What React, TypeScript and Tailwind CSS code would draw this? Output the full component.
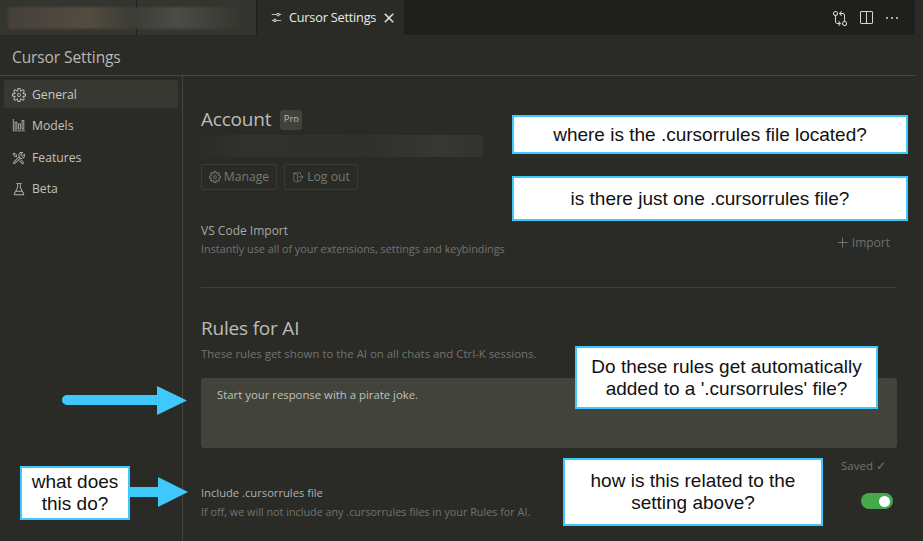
import React from "react";
import { VscSettings, VscClose, VscGitCompare, VscSplitHorizontal, VscEllipsis, VscSettingsGear, VscGraph, VscTools, VscBeaker, VscSignOut, VscAdd } from "react-icons/vsc";

function Callout({ className, children }: { className: string; children: React.ReactNode }) {
  return (
    <div
      className={`absolute flex items-center justify-center border-[2px] border-[#3fc8fb] bg-white text-center text-[19px] leading-[22px] text-[#111] ${className}`}
      style={{ fontFamily: '"Liberation Sans", Arial, sans-serif' }}
    >
      <div>{children}</div>
    </div>
  );
}

function NavItem({ icon, label, active, className = "" }: { icon: React.ReactNode; label: string; active?: boolean; className?: string }) {
  return (
    <div className={`flex h-7 items-center gap-[6px] rounded-[2px] pl-2 pt-[2px] text-[12.2px] ${active ? "bg-[#383832] text-[#c9c9c4]" : "text-[#c2c2bd]"} ${className}`}>
      <span className="flex w-[14px] justify-center text-[#b5b5b0]">{icon}</span>
      {label}
    </div>
  );
}

export default function App() {
  return (
    <div
      className="relative flex h-[541px] w-[923px] flex-col overflow-hidden bg-[#2a2b26] text-[#c8c8c3]"
      style={{ fontFamily: '"Open Sans", "Noto Sans", sans-serif' }}
    >
      {/* Tab bar */}
      <div className="flex h-[35px] shrink-0">
        <div className="relative flex h-full w-[257px] bg-[#34352f]">
          <div className="h-full w-[137px] border-r border-[#1f1f1d]" />
          <div className="h-full w-[120px] border-r border-[#1f1f1d]" />
          <div className="absolute left-2 top-[7px] h-[22px] w-[235px] bg-[linear-gradient(90deg,#45403a_0%,#534c40_35%,#3c3c36_52%,#4b4c45_72%,#34352f_100%)] blur-[1px]" />
        </div>
        <div className="flex h-full w-[147px] items-center gap-[6px] bg-[#2a2b26] pl-[13px] text-[12.7px] text-[#ecece8]">
          <VscSettings size={13} />
          <span className="tracking-[-0.2px]">Cursor Settings</span>
          <VscClose size={16} strokeWidth={0.6} className="-ml-[1px]" />
        </div>
        <div className="flex flex-1 items-center justify-end gap-[10px] bg-[#1f1f1d] pr-[15px] text-[#d6d6d1]">
          <VscGitCompare size={16} />
          <VscSplitHorizontal size={16} />
          <VscEllipsis size={16} />
        </div>
        <div className="w-2 bg-[#2a2b26]" />
      </div>

      {/* Title */}
      <div className="flex h-10 shrink-0 items-center pt-[6px] pl-3 text-[15.5px] text-[#b9b9b4]">
        <span className="tracking-[-0.1px]">Cursor Settings</span>
      </div>

      <div className="mr-2 flex flex-1 border-t border-[#44453f]">
        {/* Sidebar */}
        <div className="w-[183px] shrink-0 border-r border-[#44453f] px-1 pt-[4px]">
          <NavItem active icon={<VscSettingsGear size={14} />} label="General" />
          <NavItem icon={<VscGraph size={14} />} label="Models" className="mt-[3px]" />
          <NavItem icon={<VscTools size={14} />} label="Features" className="mt-[4px]" />
          <NavItem icon={<VscBeaker size={14} />} label="Beta" className="mt-[3px]" />
        </div>

        {/* Main */}
        <div className="flex-1 pl-[18px] pr-[18px] pt-[33px]">
          <div className="flex h-[21px] items-center gap-[9px]">
            <span className="text-[19px] tracking-[-0.2px] text-[#bcbcb7]">Account</span>
            <span className="flex h-5 w-[22px] items-center justify-center rounded-[3px] bg-[#41423b] text-[9.5px] text-[#bcbcb7]">Pro</span>
          </div>
          <div className="-ml-[10px] mt-[5px] h-[22px] w-[292px] bg-[linear-gradient(90deg,#2a2b26_0%,#31322d_20%,#2f302b_60%,#373833_85%,#32332e_100%)]" />
          <div className="mt-[7px] flex gap-[7px] text-[12.2px] text-[#787873]">
            <div className="flex h-[26px] w-[76px] items-center justify-center gap-[3px] rounded-[2px] border border-[#3a3b35]">
              <VscSettingsGear size={12} />
              Manage
            </div>
            <div className="flex h-[26px] w-[74px] items-center justify-center gap-[3px] rounded-[2px] border border-[#3a3b35]">
              <VscSignOut size={12} />
              Log out
            </div>
          </div>

          <div className="mt-[32px] flex items-start justify-between">
            <div>
              <div className="text-[12px] leading-[17px] text-[#a9a9a4]">VS Code Import</div>
              <div className="mt-[2px] text-[10.8px] leading-[16px] text-[#73736e]">Instantly use all of your extensions, settings and keybindings</div>
            </div>
            <div className="mr-[7px] mt-[10px] flex items-center gap-[3px] pt-[2px] text-[12px] leading-[18px] text-[#6f6f6a]">
              <VscAdd size={12} className="text-[#8a8a85]" />
              Import
            </div>
          </div>

          <div className="mt-[30px] border-t border-[#3e3f39]" />

          <div className="mt-[27px] text-[19px] leading-[26px] tracking-[-0.2px] text-[#bcbcb7]">Rules for AI</div>
          <div className="mt-[5px] text-[11.4px] leading-[16px] text-[#73736e]">These rules get shown to the AI on all chats and Ctrl-K sessions.</div>
          <div className="mt-[16px] h-[70px] rounded-[3px] bg-[#42433b] pl-4 pt-[9px] text-[11.35px] leading-[16px] text-[#c0c0ba]">
            Start your response with a pirate joke.
          </div>
          <div className="mt-[10px] flex items-center justify-end gap-[3px] pr-[11px] text-[11.5px] leading-4 text-[#73736e]">
            Saved <span>✓</span>
          </div>
          <div className="mt-[11px] flex items-center justify-between pr-[4px]">
            <div>
              <div className="text-[11.2px] leading-[16px] text-[#b0b0ab]">Include .cursorrules file</div>
              <div className="mt-[3px] text-[10.8px] leading-[16px] text-[#73736e]">If off, we will not include any .cursorrules files in your Rules for AI.</div>
            </div>
            <div className="mb-[3px] flex h-4 w-8 items-center justify-end rounded-full bg-[#45a84d] pr-[3px]">
              <div className="h-[11px] w-[11px] rounded-full bg-white" />
            </div>
          </div>
        </div>
      </div>

      {/* Annotations */}
      <Callout className="left-[512px] top-[115px] h-[39px] w-[396px]">where is the .cursorrules file located?</Callout>
      <Callout className="left-[512px] top-[176px] h-[45px] w-[396px]">is there just one .cursorrules file?</Callout>
      <Callout className="left-[575px] top-[346px] h-[63px] w-[303px]">Do these rules get automatically<br />added to a '.cursorrules' file?</Callout>
      <Callout className="left-[563px] top-[458px] h-[68px] w-[260px]">how is this related to the<br />setting above?</Callout>
      <Callout className="left-[20px] top-[466px] h-[54px] w-[110px]">what does<br />this do?</Callout>

      <svg className="absolute left-[60px] top-[384px]" width="130" height="34" viewBox="0 0 130 34">
        <path d="M7 11 H97 V2 L127 16.5 L97 31 V21 H7 A5 5 0 0 1 7 11 Z" fill="#3fc8fb" />
      </svg>
      <svg className="absolute left-[130px] top-[476px]" width="60" height="32" viewBox="0 0 60 32">
        <path d="M0 11 H28 V1 L58 16 L28 31 V21 H0 Z" fill="#3fc8fb" />
      </svg>
    </div>
  );
}
